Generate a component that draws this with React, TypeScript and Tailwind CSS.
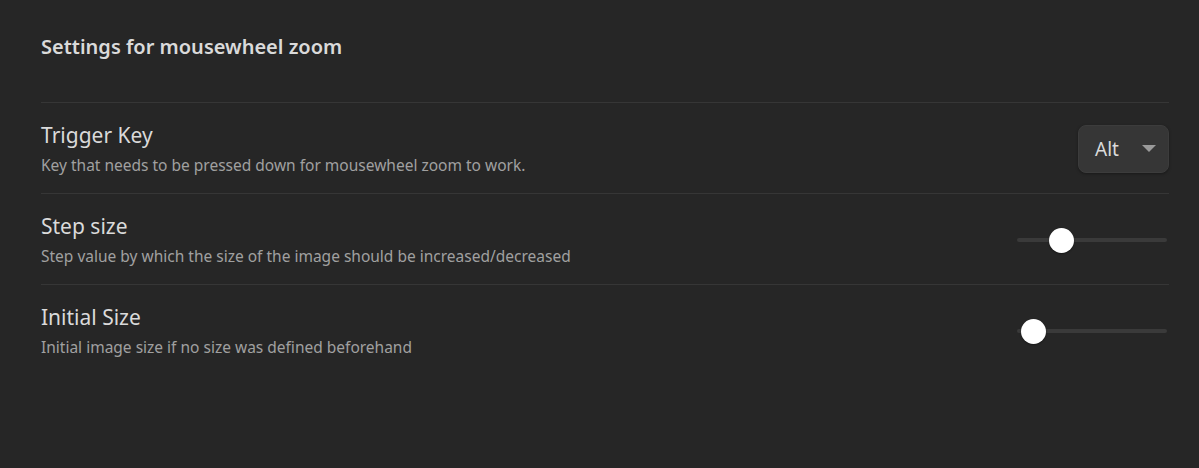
import React from "react";

const font = { fontFamily: '"Noto Sans", "Open Sans", "Liberation Sans", sans-serif' };

function Row({
  name,
  desc,
  children,
}: {
  name: string;
  desc: string;
  children: React.ReactNode;
}) {
  return (
    <div className="flex items-center border-t border-[#363636] pt-[19px] pb-[17px]">
      <div className="flex-1 min-w-0">
        <div className="text-[21px] leading-[26px] text-[#dadada]">{name}</div>
        <div className="mt-[6px] text-[15.5px] leading-[22px] text-[#a0a0a0]">{desc}</div>
      </div>
      {children}
    </div>
  );
}

function Slider({ offset }: { offset: number }) {
  return (
    <div className="relative w-[150px] h-[25px] mr-[2px]">
      <div className="absolute left-0 right-0 top-[10px] h-[4px] rounded-full bg-[#3a3a3a]" />
      <div
        className="absolute top-0 w-[25px] h-[25px] rounded-full bg-white shadow-[0_1px_2px_rgba(0,0,0,0.4)]"
        style={{ left: offset }}
      />
    </div>
  );
}

export default function App() {
  return (
    <div className="w-[1199px] h-[468px] bg-[#262626] overflow-hidden" style={font}>
      <div className="pl-[41px] pr-[30px] pt-[35px]">
        <div className="text-[20px] leading-[24px] font-semibold text-[#dadada] mb-[43px]">
          Settings for mousewheel zoom
        </div>
        <Row name="Trigger Key" desc="Key that needs to be pressed down for mousewheel zoom to work.">
          <div className="flex items-center w-[91px] h-[48px] rounded-[8px] bg-[#363636] border border-[#3c3c3c] shadow-[0_1px_3px_rgba(0,0,0,0.35)] pl-[16px] pr-[12px]">
            <span className="flex-1 text-[19px] text-[#dadada]">Alt</span>
            <svg width="14" height="8" viewBox="0 0 14 8">
              <path d="M0 0 L14 0 L7 7 Z" fill="#9a9a9a" />
            </svg>
          </div>
        </Row>
        <Row name="Step size" desc="Step value by which the size of the image should be increased/decreased">
          <Slider offset={32} />
        </Row>
        <Row name="Initial Size" desc="Initial image size if no size was defined beforehand">
          <Slider offset={4} />
        </Row>
      </div>
    </div>
  );
}
